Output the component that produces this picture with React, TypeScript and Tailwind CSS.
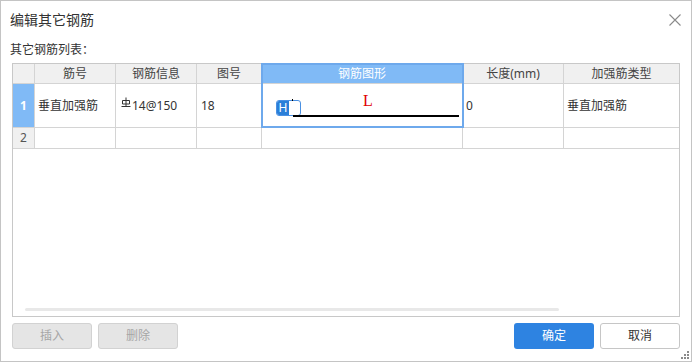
import React from "react";

const font = { fontFamily: '"Noto Sans", "Noto Sans CJK SC", sans-serif' };
const cjk = { fontFamily: '"Noto Sans CJK SC", sans-serif' };

const cols = ["w-[22px]", "w-[81px]", "w-[81px]", "w-[65px]", "w-[201px]", "w-[101px]", "w-[115px]"];

function GradeMark() {
  return (
    <svg width="10" height="11" viewBox="0 0 10 11" className="mt-[-7px] mr-[1px]">
      <path d="M1.5 3.5h7v3.5h-7z" fill="none" stroke="#333" strokeWidth="1" />
      <path d="M5 0.5v9M0.5 9.5h9" stroke="#333" strokeWidth="1" />
    </svg>
  );
}

function ShapeCell() {
  return (
    <div className="relative h-full w-full">
      {/* H handle */}
      <div className="absolute left-[14px] top-[16px] flex h-[16px] w-[25px] overflow-hidden rounded-[3px] border border-[#4a90e2] bg-white">
        <div className="flex w-[12px] items-center justify-center bg-[#2a7fd9] text-[12px] leading-none text-white">
          H
        </div>
      </div>
      <div className="absolute left-[30px] top-[15px] h-[2px] w-[1px] bg-black" />
      <div className="absolute left-[31px] top-[31px] h-[2px] w-[166px] bg-black" />
      <div
        className="absolute left-[101px] top-[9px] text-[16px] leading-none text-[#e00000]"
        style={{ fontFamily: '"Liberation Serif", serif' }}
      >
        L
      </div>
    </div>
  );
}

export default function App() {
  const head = ["", "筋号", "钢筋信息", "图号", "钢筋图形", "长度(mm)", "加强筋类型"];
  return (
    <div style={font} className="relative flex h-[362px] w-[692px] flex-col border border-[#c4c4c4] bg-white text-[#333]">
      {/* title */}
      <div className="flex h-[37px] items-center justify-between pl-[9px] pr-[10px]">
        <span className="text-[14px] text-[#333]">编辑其它钢筋</span>
        <svg width="12" height="12" viewBox="0 0 12 12">
          <path d="M0.5 0.5l11 11M11.5 0.5l-11 11" stroke="#8a8a8a" strokeWidth="1.1" />
        </svg>
      </div>
      <div className="flex h-[21px] items-center pl-[9px] text-[12px]" style={cjk}>
        其它钢筋列表：
      </div>

      {/* table */}
      <div className="relative mx-[11px] mt-[4px] flex h-[254px] flex-col border border-[#c8c8c8] text-[12px]">
        {/* header */}
        <div className="flex h-[20px] border-b border-[#d4d4d4] bg-[#f0f0f0]">
          {head.map((h, i) => (
            <div
              key={i}
              className={`${cols[i]} flex items-center justify-center ${i < 6 ? "border-r border-[#d4d4d4]" : ""} ${
                i === 4 ? "bg-[#80baf6] text-white" : "text-[#444]"
              }`}
            >
              {h}
            </div>
          ))}
        </div>
        {/* row 1 */}
        <div className="flex h-[44px] border-b border-[#d4d4d4]">
          <div className={`${cols[0]} flex items-center justify-center border-r border-[#d4d4d4] bg-[#80baf6] font-bold text-white`}>
            1
          </div>
          <div className={`${cols[1]} flex items-center border-r border-[#d4d4d4] pl-[3px]`}>垂直加强筋</div>
          <div className={`${cols[2]} flex items-center border-r border-[#d4d4d4] pl-[5px]`}>
            <GradeMark />
            14@150
          </div>
          <div className={`${cols[3]} flex items-center border-r border-[#d4d4d4] pl-[4px]`}>18</div>
          <div className={`${cols[4]} border-r border-[#d4d4d4]`}>
            <ShapeCell />
          </div>
          <div className={`${cols[5]} flex items-center border-r border-[#d4d4d4] pl-[3px]`}>0</div>
          <div className={`${cols[6]} flex items-center pl-[3px]`}>垂直加强筋</div>
        </div>
        {/* row 2 */}
        <div className="flex h-[21px] border-b border-[#d4d4d4]">
          {cols.map((c, i) => (
            <div
              key={i}
              className={`${c} flex items-center justify-center ${i < 6 ? "border-r border-[#d4d4d4]" : ""} ${
                i === 0 ? "bg-[#f0f0f0] text-[#555]" : ""
              }`}
            >
              {i === 0 ? "2" : ""}
            </div>
          ))}
        </div>
        <div className="flex-1" />
        <div className="mb-[5px] ml-[12px] h-[3px] w-[534px] rounded-full bg-[#e8e8e8]" />

        {/* selection frame */}
        <div className="pointer-events-none absolute left-[248px] top-[-1px] h-[65px] w-[203px] border-2 border-[#6ea9ec]" />
      </div>

      {/* buttons */}
      <div className="mx-[11px] mt-[6px] flex h-[26px] text-[12px]">
        <button className="h-[26px] w-[80px] rounded-[3px] border border-[#d2d2d2] bg-[#e5e5e5] text-[#a6a6a6]">插入</button>
        <button className="ml-[6px] h-[26px] w-[80px] rounded-[3px] border border-[#d2d2d2] bg-[#e5e5e5] text-[#a6a6a6]">删除</button>
        <div className="flex-1" />
        <button className="h-[26px] w-[80px] rounded-[3px] bg-[#2e83e1] text-white">确定</button>
        <button className="ml-[6px] h-[26px] w-[80px] rounded-[3px] border border-[#c6c6c6] bg-white text-[#333]">取消</button>
      </div>

      {/* resize grip */}
      <svg className="absolute bottom-[1px] right-[1px]" width="9" height="9" viewBox="0 0 9 9">
        <g fill="#8a8a8a">
          <rect x="6" y="0" width="2" height="2" />
          <rect x="3" y="3" width="2" height="2" />
          <rect x="6" y="3" width="2" height="2" />
          <rect x="0" y="6" width="2" height="2" />
          <rect x="3" y="6" width="2" height="2" />
          <rect x="6" y="6" width="2" height="2" />
        </g>
      </svg>
    </div>
  );
}
